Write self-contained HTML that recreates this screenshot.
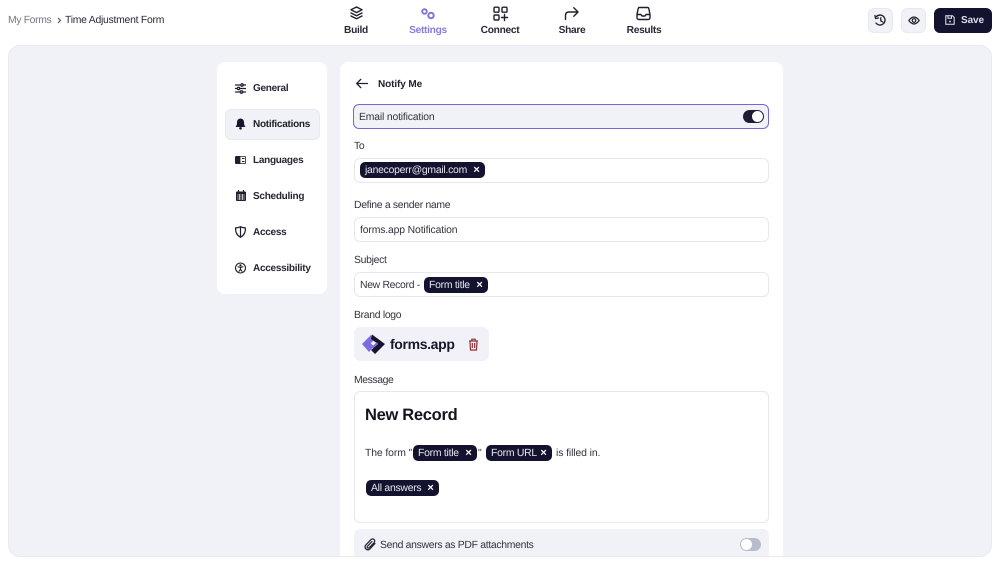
<!DOCTYPE html>
<html lang="en"><head><meta charset="utf-8"><title>Notify Me</title>
<style>
*{box-sizing:border-box}
html,body{margin:0;padding:0;width:1000px;height:564px;overflow:hidden;background:#fff}
body{position:relative;font-family:"Liberation Sans",sans-serif;color:#1c1c2a;text-rendering:geometricPrecision}
.a,.t{position:absolute}
.t{white-space:nowrap;line-height:16px;font-size:10.4px;letter-spacing:-.3px;color:#34343f;transform:translateY(-7px)}
.b{font-weight:700;color:#23232f;font-size:10px;letter-spacing:-.1px}
.nav{font-size:10.2px;font-weight:700;color:#2a2a36;letter-spacing:-.3px;transform:translate(-50%,-7px)}
.side{font-size:10px;font-weight:700;color:#272733;letter-spacing:-.27px}
.box{position:absolute;left:354px;width:415px;background:#fff;border:1px solid #e7e8ef;border-radius:6px}
.chip{position:absolute;height:16px;background:#14132f;border-radius:5px;color:#e4e4ee;font-size:10.4px;line-height:17.500px;padding-left:5px;white-space:nowrap;letter-spacing:-.25px}
.chip b{position:absolute;right:5.500px;top:0;font-size:11px;line-height:16px;color:#fff;font-weight:700}
svg{position:absolute;overflow:visible}
.s{fill:none;stroke:#20202c;stroke-width:1.4;stroke-linecap:round;stroke-linejoin:round}
</style></head><body>

<div class="t" style="left:8px;top:20px;color:#777784;letter-spacing:-.35px">My Forms</div>
<svg style="left:57px;top:17px" width="5" height="7"><path d="M1 1l2.500 2.500L1 6" fill="none" stroke="#555" stroke-width="1.100"/></svg>
<div class="t" style="left:65px;top:20px;color:#2b2b38;letter-spacing:-.25px">Time Adjustment Form</div>

<svg class="s" style="left:349px;top:6px" width="15" height="15" viewBox="0 0 15 15"><path d="M7.500 1L13 3.800 7.500 6.600 2 3.800zM2 7l5.500 2.800L13 7M2 10l5.500 2.800L13 10"/></svg>
<div class="t nav" style="left:356px;top:30px">Build</div>

<svg style="left:420px;top:7px" width="16" height="13" viewBox="0 0 16 13"><circle cx="4.500" cy="4.500" r="2.300" fill="none" stroke="#8372d8" stroke-width="1.900"/><circle cx="11" cy="8.500" r="2.700" fill="none" stroke="#8372d8" stroke-width="2"/></svg>
<div class="t nav" style="left:428px;top:30px;color:#8a7bd9">Settings</div>

<svg class="s" style="left:493px;top:6px" width="15" height="15" viewBox="0 0 15 15"><rect x="1" y="1.200" width="5" height="5" rx="1"/><rect x="9" y="1.200" width="5" height="5" rx="1"/><rect x="1" y="9" width="5" height="5" rx="1"/><path d="M11.500 8.500v6M8.500 11.500h6"/></svg>
<div class="t nav" style="left:500px;top:30px">Connect</div>

<svg class="s" style="left:564px;top:6px" width="15" height="15" viewBox="0 0 15 15"><path d="M1.500 13.500V9.500Q1.500 6 5 6H14M9.800 1.800L14 6l-4.200 4.200"/></svg>
<div class="t nav" style="left:572px;top:30px">Share</div>

<svg class="s" style="left:636px;top:6px" width="15" height="15" viewBox="0 0 15 15"><path d="M3.500 1.500h8q1 0 1.300 1L14 8.500v3q0 2-2 2H3q-2 0-2-2v-3L2.200 2.500q.3-1 1.300-1zM1.200 8.500H5l1 1.500h3l1-1.500h3.800"/></svg>
<div class="t nav" style="left:644px;top:30px">Results</div>

<div class="a" style="left:868px;top:8px;width:25px;height:25px;background:#f1f2f7;border:1px solid #e8e9f0;border-radius:6px"></div>
<svg class="s" style="left:874px;top:14px;stroke-width:1.300" width="13" height="13" viewBox="0 0 13 13"><path d="M2.500 2.500A5 5 0 1 1 2 9M1 1.500l.5 3 3-.5M6.800 3.800v3l2 1.200"/></svg>
<div class="a" style="left:901px;top:8px;width:25px;height:25px;background:#f1f2f7;border:1px solid #e8e9f0;border-radius:6px"></div>
<svg class="s" style="left:908px;top:15px;stroke-width:1.200" width="12" height="11" viewBox="0 0 12 11"><path d="M.8 5.500Q6-1.500 11.200 5.500 6 12.500 .8 5.500z"/><circle cx="6" cy="5.500" r="1.800"/></svg>
<div class="a" style="left:934px;top:8px;width:58px;height:25px;background:#14132f;border-radius:6px"></div>
<svg style="left:945px;top:15px" width="10" height="10" viewBox="0 0 10 10"><path d="M1 .8h6.500L9.200 2.500v6.700H.8V.8zM3 1v2.200h3.500V1" fill="none" stroke="#e8e8f0" stroke-width="1"/><circle cx="5" cy="6.500" r=".9" fill="#e8e8f0"/></svg>
<div class="t b" style="left:961px;top:20px;color:#dcdce8">Save</div>

<div class="a" style="left:8px;top:45px;width:984px;height:512px;background:#f1f2f7;border:1px solid #e9eaf1;border-radius:12px;overflow:hidden">
  <div class="a" style="left:208px;top:16px;width:110px;height:232px;background:#fff;border-radius:8px"></div>
  <div class="a" style="left:216px;top:63px;width:95px;height:31px;background:#f1f2f7;border:1px solid #e8e9f0;border-radius:6px"></div>
  <div class="a" style="left:331px;top:16px;width:443px;height:520px;background:#fff;border-radius:8px 8px 0 0"></div>
  <div class="a" style="left:345px;top:483px;width:415px;height:40px;background:#f1f2f7;border-radius:6px"></div>
</div>

<!-- sidebar -->
<svg class="s" style="left:235px;top:83px;stroke-width:1.300" width="11" height="11" viewBox="0 0 11 11"><path d="M.5 2h10M.5 5.500h10M.5 9h10"/><circle cx="7" cy="2" r="1.200" fill="#fff"/><circle cx="3.500" cy="5.500" r="1.200" fill="#fff"/><circle cx="6.500" cy="9" r="1.200" fill="#fff"/></svg>
<div class="t side" style="left:253px;top:88px">General</div>
<svg style="left:235px;top:118px" width="11" height="12" viewBox="0 0 11 12"><path d="M5.500 .5Q9 .8 9 4.500q0 3 1.500 4.500H.5Q2 7.500 2 4.500 2 .8 5.500 .5z" fill="#16162a"/><circle cx="5.500" cy="10.300" r="1.300" fill="#16162a"/></svg>
<div class="t side" style="left:253px;top:124px;color:#1e1e2a">Notifications</div>
<svg style="left:235px;top:156px" width="11" height="8" viewBox="0 0 11 8"><rect x=".4" y=".4" width="10.200" height="7.200" rx="1" fill="#fff" stroke="#20202c" stroke-width=".8"/><rect x=".4" y=".4" width="5" height="7.200" fill="#20202c"/><path d="M7 2.500h2.500M7 5.500h2.500" stroke="#20202c"/></svg>
<div class="t side" style="left:253px;top:160px">Languages</div>
<svg style="left:236px;top:190px" width="10" height="11" viewBox="0 0 10 11"><rect y="1.500" width="10" height="9.500" rx="1" fill="#20202c"/><path d="M2.500 0v2.500M7.500 0v2.500" stroke="#20202c" stroke-width="1.200"/><path d="M1 5h8M1 7h8M1 9h8M3.300 4v6M6.700 4v6" stroke="#fff" stroke-width=".6"/></svg>
<div class="t side" style="left:253px;top:196px">Scheduling</div>
<svg class="s" style="left:235px;top:226px;stroke-width:1.200" width="11" height="12" viewBox="0 0 11 12"><path d="M5.500 .7Q8 1.900 10.400 1.900 10.800 8.500 5.500 11.300 .2 8.500 .6 1.900 3 1.900 5.500 .7zM5.500 1v10"/></svg>
<div class="t side" style="left:253px;top:232px">Access</div>
<svg class="s" style="left:235px;top:262px;stroke-width:1.100" width="11" height="12" viewBox="0 0 11 12"><circle cx="5.500" cy="6" r="5"/><circle cx="5.500" cy="3.400" r=".6" fill="#20202c"/><path d="M3 4.800l2.500.6 2.500-.6M5.500 5.400v2M5.500 7.400L4 9.300M5.500 7.400L7 9.300"/></svg>
<div class="t side" style="left:253px;top:268px">Accessibility</div>

<!-- header -->
<svg class="s" style="left:356px;top:78px;stroke-width:1.300" width="12" height="11" viewBox="0 0 12 11"><path d="M11.500 5.500H.8M4.800 1.300L.7 5.500l4.100 4.200"/></svg>
<div class="t b" style="left:378px;top:84px">Notify Me</div>

<div class="a" style="left:353px;top:104px;width:416px;height:25px;background:#f1f2f7;border:1.500px solid #7766d6;border-radius:6px"></div>
<div class="t" style="left:359px;top:117px;letter-spacing:-.17px">Email notification</div>
<div class="a" style="left:743px;top:110px;width:21px;height:13px;background:#1d1c36;border-radius:7px"></div>
<div class="a" style="left:752px;top:111px;width:11px;height:11px;background:#fff;border-radius:50%"></div>

<div class="t" style="left:354px;top:146px">To</div>
<div class="box" style="top:158px;height:25px"></div>
<div class="chip" style="left:360px;top:162px;width:125px">janecoperr@gmail.com<b>×</b></div>

<div class="t" style="left:354px;top:205px">Define a sender name</div>
<div class="box" style="top:217px;height:25px"></div>
<div class="t" style="left:360px;top:230px;letter-spacing:-.14px">forms.app Notification</div>

<div class="t" style="left:354px;top:260px">Subject</div>
<div class="box" style="top:272px;height:25px"></div>
<div class="t" style="left:360px;top:285px">New Record -</div>
<div class="chip" style="left:424px;top:277px;width:64px">Form title<b>×</b></div>

<div class="t" style="left:354px;top:315px">Brand logo</div>
<div class="a" style="left:354px;top:327px;width:135px;height:34px;background:#f1f2f7;border-radius:6px"></div>
<svg style="left:361px;top:334px" width="25" height="20" viewBox="0 0 25 20"><path d="M1 10L10 1l4 4-5 5 3 3-4 5z" fill="#7f6ae0"/><path d="M11 .5L24 10 14 20l-4-4 7-6-7-5z" fill="#15142a"/><path d="M9 10l3 3 4.500-4" fill="none" stroke="#7f6ae0" stroke-width="2"/></svg>
<div class="t" style="left:390px;top:342.500px;font-size:14px;font-weight:700;letter-spacing:-.35px;color:#17172a">forms.app</div>
<svg style="left:468px;top:338px" width="11" height="13" viewBox="0 0 11 13"><path d="M1 3h9M3.800 3V1.200h3.400V3M2 3l.5 9h6L9 3M4.300 5v5M6.700 5v5" fill="none" stroke="#8e3038" stroke-width="1.200"/></svg>

<div class="t" style="left:354px;top:380px;letter-spacing:-.4px">Message</div>
<div class="box" style="top:391px;height:132px"></div>
<div class="t" style="left:365px;top:414px;font-size:16.500px;font-weight:700;color:#14141f;letter-spacing:-.3px">New Record</div>
<div class="t" style="left:365px;top:453px;letter-spacing:-.1px">The form "</div>
<div class="chip" style="left:413px;top:445px;width:64px">Form title<b>×</b></div>
<div class="t" style="left:478px;top:453px">"</div>
<div class="chip" style="left:486px;top:445px;width:66px">Form URL<b>×</b></div>
<div class="t" style="left:556px;top:453px;letter-spacing:-.1px">is filled in.</div>
<div class="chip" style="left:366px;top:480px;width:73px">All answers<b>×</b></div>

<svg class="s" style="left:364px;top:538px;stroke-width:1.200" width="12" height="13" viewBox="0 0 12 13"><path d="M11 5.500L6 10.800Q4 12.800 2 11T2 6.800L7 1.600Q8.500.3 10 1.500T10 4.800L5.300 9.600Q4.300 10.500 3.500 9.800T3.700 8L8 3.500"/></svg>
<div class="t" style="left:380px;top:545px">Send answers as PDF attachments</div>
<div class="a" style="left:740px;top:538px;width:21px;height:13px;background:#b7bdcb;border-radius:7px"></div>
<div class="a" style="left:741px;top:539px;width:11px;height:11px;background:#fff;border-radius:50%"></div>

</body></html>
